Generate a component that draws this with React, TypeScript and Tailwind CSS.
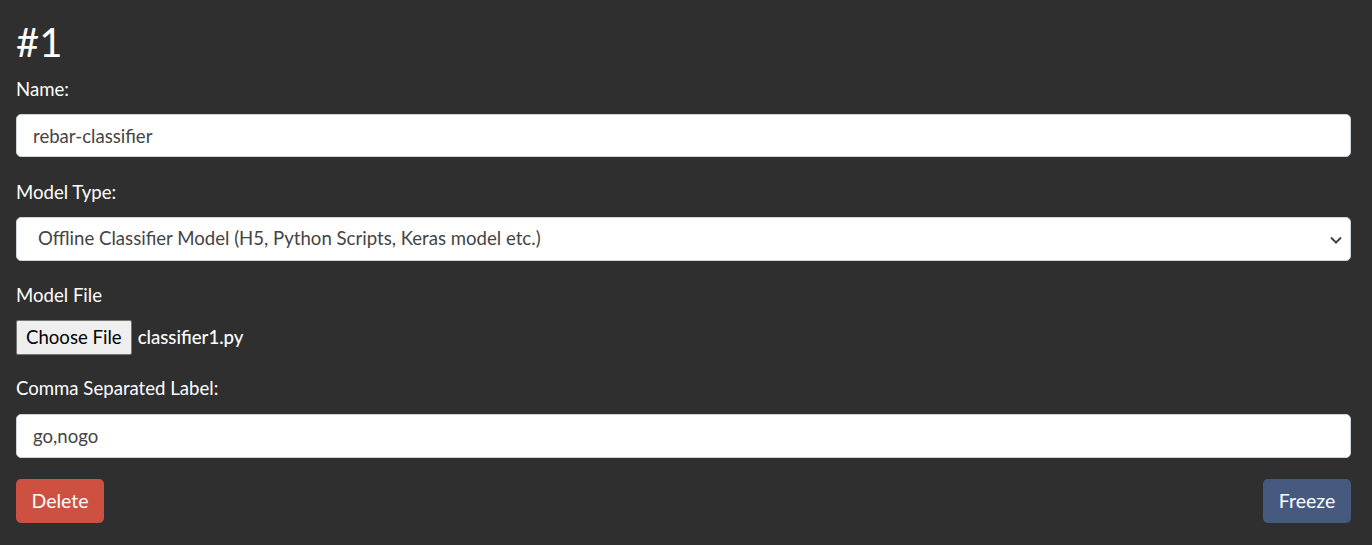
export default function App() {
  const labelCls = 'block text-[18.6px] leading-[25px] text-white'
  const inputCls =
    'block w-full rounded-[5px] border border-[#ced4da] bg-white px-4 text-[18.6px] text-[#444] outline-none'

  return (
    <div className="min-h-screen bg-[#2f2f2f] pl-4 pr-[21px] pt-[18px] font-['Lato','Liberation_Sans',sans-serif]">
      <h1 className="text-[40px] leading-[48px] font-normal text-white">#1</h1>

      <label className={`${labelCls} mt-[11px]`}>Name:</label>
      <input className={`${inputCls} mt-3 h-[43px]`} defaultValue="rebar-classifier" readOnly />

      <label className={`${labelCls} mt-[23px]`}>Model Type:</label>
      <div className="relative mt-3">
        <select
          className={`${inputCls} h-[44px] appearance-none pl-[21px]`}
          defaultValue="offline"
        >
          <option value="offline">Offline Classifier Model (H5, Python Scripts, Keras model etc.)</option>
        </select>
        <svg
          className="pointer-events-none absolute right-[9px] top-[19px] h-[8px] w-[12px]"
          viewBox="0 0 12 8"
          fill="none"
          stroke="#444"
          strokeWidth={2}
        >
          <path d="M1 1.5l5 5 5-5" />
        </svg>
      </div>

      <label className={`${labelCls} mt-[22px]`}>Model File</label>
      <div className="mt-3 flex items-center gap-[6px]">
        <button className="h-[35px] rounded-[2px] border border-[#767676] bg-[#efefef] px-[9px] text-[18.6px] text-black">
          Choose File
        </button>
        <span className="text-[18.6px] font-medium text-white">classifier1.py</span>
      </div>

      <label className={`${labelCls} mt-[21px]`}>Comma Separated Label:</label>
      <input className={`${inputCls} mt-[13px] h-[44px]`} defaultValue="go,nogo" readOnly />

      <div className="mt-[21px] flex justify-between">
        <button className="h-[44px] w-[88px] rounded-[5px] bg-[#cd5041] text-[19.5px] text-white">
          Delete
        </button>
        <button className="h-[44px] w-[88px] rounded-[5px] bg-[#465a80] text-[19.5px] text-white">
          Freeze
        </button>
      </div>
    </div>
  )
}
